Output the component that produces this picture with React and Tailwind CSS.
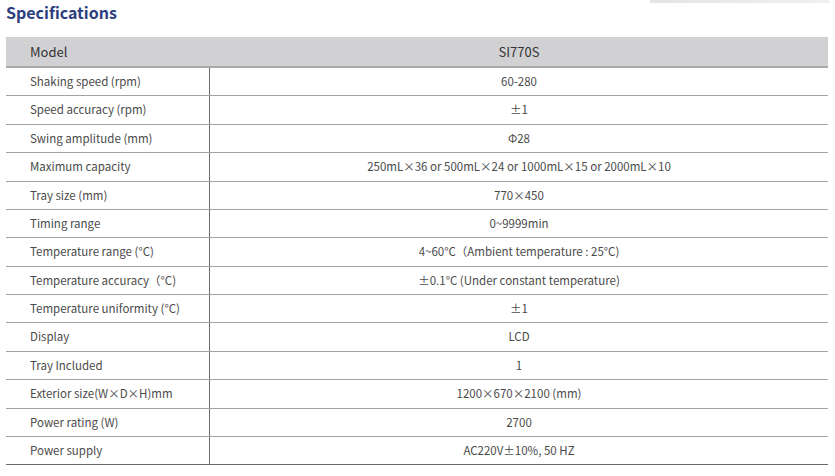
import React from 'react';

const rows = [
  ['Shaking speed (rpm)', '60-280'],
  ['Speed accuracy (rpm)', '±1'],
  ['Swing amplitude (mm)', 'Φ28'],
  ['Maximum capacity', '250mL×36 or 500mL×24 or 1000mL×15 or 2000mL×10'],
  ['Tray size (mm)', '770×450'],
  ['Timing range', '0~9999min'],
  ['Temperature range (°C)', '4~60°C（Ambient temperature : 25°C)'],
  ['Temperature accuracy（°C)', '±0.1°C (Under constant temperature)'],
  ['Temperature uniformity (°C)', '±1'],
  ['Display', 'LCD'],
  ['Tray Included', '1'],
  ['Exterior size(W×D×H)mm', '1200×670×2100 (mm)'],
  ['Power rating (W)', '2700'],
  ['Power supply', 'AC220V±10%, 50 HZ'],
];

export default function App() {
  return (
    <div className="w-[835px] h-[476px] bg-white overflow-hidden" style={{ fontFamily: '"Noto Sans CJK SC", "Noto Sans", sans-serif' }}>
      <div className="flex justify-between items-start">
        <h1 className="pl-[6px] pt-[1px] text-[16px] leading-[23px] font-semibold text-[#2c3e7e]">Specifications</h1>
        <div className="w-[180px] h-[3px] mr-[5px] bg-gradient-to-r from-[#e4e4e6] to-[#f0f0f0]" />
      </div>
      <div className="mx-[6px] mt-[13px] w-[822px]">
        <div className="flex h-[31px] bg-[#d1d1d4] border-b-2 border-[#a9a9ab] text-[13px] text-[#333]">
          <div className="w-[204px] pl-[24px] flex items-center">Model</div>
          <div className="flex-1 flex items-center justify-center">SI770S</div>
        </div>
        {rows.map(([k, v], i) => (
          <div
            key={i}
            className={`flex h-[28.38px] border-b text-[11.5px] text-[#4a4a4a] ${i === rows.length - 1 ? 'border-[#6a6a6a]' : 'border-[#a3a3a3]'}`}
          >
            <div className="w-[204px] pl-[24px] flex items-center border-r border-[#6a6a6a]">{k}</div>
            <div className="flex-1 flex items-center justify-center">{v}</div>
          </div>
        ))}
      </div>
    </div>
  );
}
